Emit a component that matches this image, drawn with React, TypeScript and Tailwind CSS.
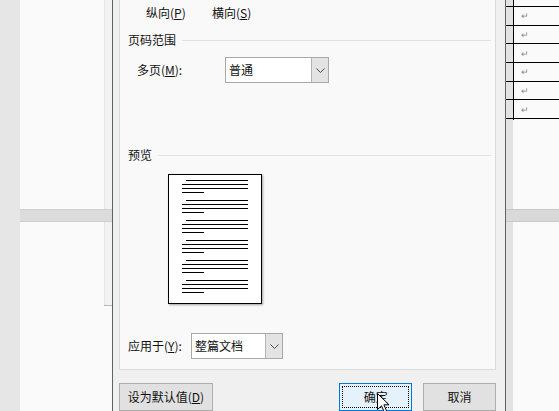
function Chevron() {
  return (
    <svg width="9" height="5" viewBox="0 0 9 5" fill="none">
      <path d="M0.5 0.5 L4.5 4.5 L8.5 0.5" stroke="#4a4a4a" strokeWidth="1" />
    </svg>
  );
}

function Select({ value, width }: { value: string; width: string }) {
  return (
    <div className={`flex h-[26px] ${width} border border-[#a8a8a8] bg-white`}>
      <div className="flex flex-1 items-center pl-[3px]">{value}</div>
      <div className="flex w-[17px] items-center justify-center border-l border-[#b4b4b4] bg-[#e3e3e3]">
        <Chevron />
      </div>
    </div>
  );
}

function Heading({ label }: { label: string }) {
  return (
    <div className="flex h-[16px] items-center pl-[8px]">
      <span className="leading-[16px]">{label}</span>
      <div className="ml-[6px] flex-1 border-t border-[#e2e2e2]" />
    </div>
  );
}

function PreviewPage() {
  const groups = [0, 1, 2, 3, 4, 5];
  return (
    <div className="ml-[48px] mt-[11px] h-[130px] w-[94px] border border-black bg-white shadow-[1px_1px_2px_rgba(0,0,0,0.35)]">
      <svg width="92" height="128" viewBox="0 0 92 128" shapeRendering="crispEdges">
        {groups.map((g) => {
          const y = 5.5 + g * 20;
          return (
            <g key={g} stroke="#000" strokeWidth="1">
              <line x1="17" y1={y} x2="79" y2={y} />
              <line x1="13" y1={y + 4} x2="79" y2={y + 4} />
              <line x1="13" y1={y + 8} x2="79" y2={y + 8} />
              <line x1="13" y1={y + 12} x2="35" y2={y + 12} />
            </g>
          );
        })}
      </svg>
    </div>
  );
}

function Button({ label, width, focused }: { label: React.ReactNode; width: string; focused?: boolean }) {
  return (
    <div
      className={`flex h-[28px] ${width} items-center justify-center ${
        focused ? "border border-[#0078d7] bg-[#e5f1fb] p-[2px]" : "border border-[#adadad] bg-[#e1e1e1]"
      }`}
    >
      {focused ? (
        <div className="flex h-full w-full items-center justify-center border border-dotted border-black">{label}</div>
      ) : (
        label
      )}
    </div>
  );
}

function Dialog() {
  return (
    <div className="flex w-[394px] shrink-0 flex-col border-x border-[#5d6369] bg-[#f0f0f0] pl-[6px] pr-[9px]">
      <div className="flex h-[372px] flex-col border-x border-b border-[#dadada] bg-[#f9f9f9] pr-[4px]">
        <div className="mt-[5px] flex h-[16px] items-center pl-[26px] leading-[16px]">
          <span className="w-[66px]">
            纵向(<span className="underline">P</span>)
          </span>
          <span>
            横向(<span className="underline">S</span>)
          </span>
        </div>
        <div className="mt-[11px]">
          <Heading label="页码范围" />
        </div>
        <div className="mt-[9px] flex items-center pl-[17px]">
          <span className="w-[88px]">
            多页(<span className="underline">M</span>):
          </span>
          <Select value="普通" width="w-[104px]" />
        </div>
        <div className="mt-[64px]">
          <Heading label="预览" />
        </div>
        <PreviewPage />
        <div className="mt-[29px] flex items-center pl-[8px]">
          <span className="w-[63px]">
            应用于(<span className="underline">Y</span>):
          </span>
          <Select value="整篇文档" width="w-[92px]" />
        </div>
      </div>
      <div className="mt-[13px] flex">
        <Button
          width="w-[94px]"
          label={
            <span>
              设为默认值(<span className="underline">D</span>)
            </span>
          }
        />
        <div className="w-[127px]" />
        <Button width="w-[73px]" label="确定" focused />
        <div className="w-[11px]" />
        <Button width="w-[73px]" label="取消" />
      </div>
    </div>
  );
}

function LeftPages() {
  return (
    <div className="flex w-[92px] shrink-0 flex-col">
      <div className="flex h-[209px] bg-[#fafafa]">
        <div className="flex-1" />
        <div className="w-[8px] border-l border-[#e6e6e6] bg-[#f3f3f3]" />
      </div>
      <div className="h-[13px] border-y border-[#cfcfcf] bg-[#dcdcdc]" />
      <div className="flex flex-1 flex-col bg-[#fafafa]">
        <div className="flex h-[83px]">
          <div className="flex-1" />
          <div className="w-[8px] border-l border-[#e6e6e6] bg-[#f3f3f3]" />
        </div>
        <div className="ml-[84px] border-t border-[#b9b9b9]" />
      </div>
    </div>
  );
}

function RightPages() {
  const rows = [0, 1, 2, 3, 4, 5];
  return (
    <div className="flex flex-1 flex-col">
      <div className="relative h-[209px] bg-[#fafafa]">
        <div className="flex flex-col">
          <div className="h-[7px] border-b border-black" />
          {rows.map((r) => (
            <div key={r} className="flex h-[18.67px] items-center border-b border-black pl-[15px] text-[9px] leading-none text-[#8a8a8a]">
              ↵
            </div>
          ))}
        </div>
        <div className="absolute left-[7px] top-0 h-[120px] border-l border-black" />
        <div className="absolute inset-y-0 left-0 w-[7px] bg-[rgba(0,0,0,0.09)]" />
      </div>
      <div className="h-[13px] border-y border-[#c8c8c8] bg-[#d9d9d9]" />
      <div className="relative flex-1 bg-[#fafafa]">
        <div className="absolute inset-y-0 left-0 w-[7px] bg-[rgba(0,0,0,0.09)]" />
      </div>
    </div>
  );
}

function Cursor() {
  return (
    <svg className="absolute left-[377px] top-[393px]" width="13" height="20" viewBox="0 0 13 20">
      <path d="M0.5 0.5 L0.5 16.5 L4.5 12.8 L7.3 19 L9.6 18 L6.9 11.8 L12 11.8 Z" fill="#fff" stroke="#000" strokeWidth="1" />
    </svg>
  );
}

export default function App() {
  return (
    <div className="relative flex h-[411px] w-[559px] overflow-hidden bg-[#e6e6e6] font-['Microsoft_YaHei','Noto_Sans_CJK_SC',sans-serif] text-[12px] text-[#111]">
      <div className="w-[20px] shrink-0" />
      <LeftPages />
      <Dialog />
      <RightPages />
      <Cursor />
    </div>
  );
}
